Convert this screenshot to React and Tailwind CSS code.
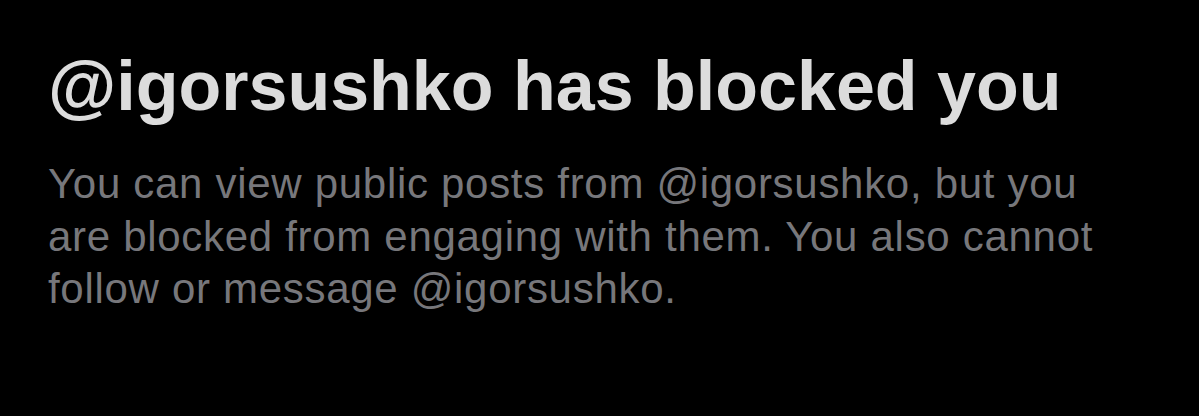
export default function App() {
  return (
    <div className="w-[1199px] h-[416px] bg-black overflow-hidden" style={{ fontFamily: '"Liberation Sans", Arial, sans-serif' }}>
      <div className="pl-[48px] pt-[46px]">
        <h1 className="text-[70px] leading-[80px] font-bold text-[#dcdcdc]">@igorsushko has blocked you</h1>
        <p className="mt-[32px] text-[42px] leading-[52.5px] tracking-[0.7px] text-[#77777b] whitespace-nowrap">
          You can view public posts from @igorsushko, but you
          <br />
          are blocked from engaging with them. You also cannot
          <br />
          follow or message @igorsushko.
        </p>
      </div>
    </div>
  );
}
